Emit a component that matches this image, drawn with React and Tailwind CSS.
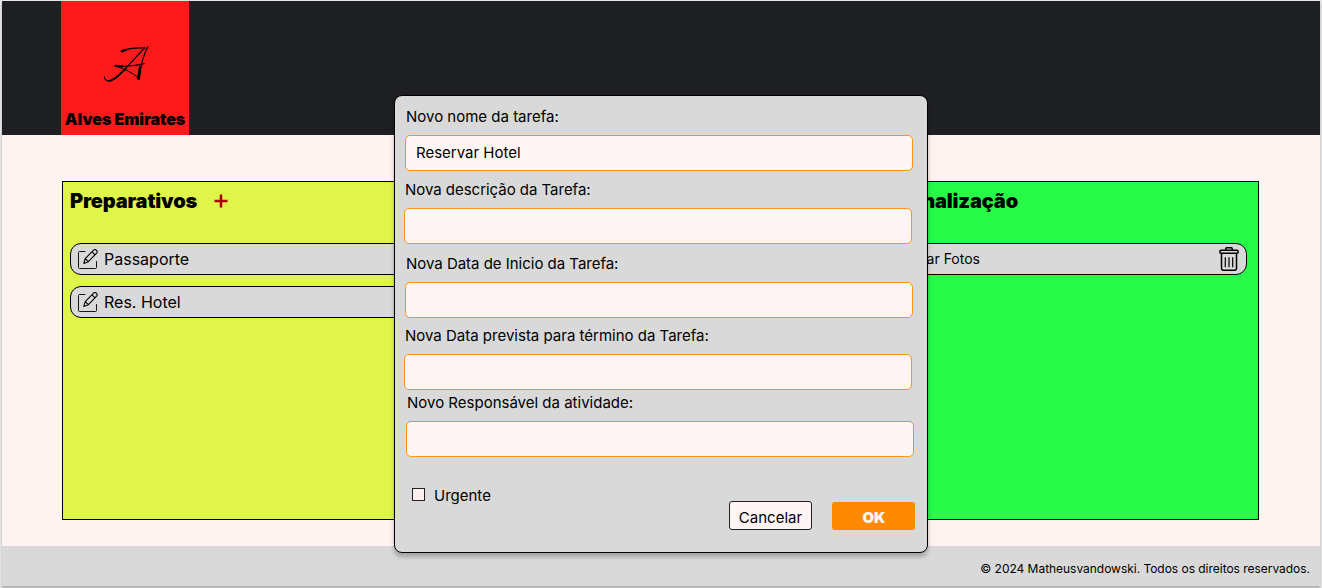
import React from "react";

function LogoMark() {
  return (
    <svg className="mt-[43px] ml-[8px] h-[40px] w-[50px]" viewBox="0 0 50 40" fill="none" stroke="#000" strokeLinecap="round" strokeLinejoin="round">
      <path d="M17.5 6.9 C23 4.6 30 3.6 41 3.8" strokeWidth="1.2" />
      <path d="M17.8 7.4 L22 5.9" strokeWidth="2.2" />
      <path d="M40.5 4 C33 12 26 20 19 27 C13 33 8 37.5 4 37 C1.5 36.3 0.2 34.5 0.3 32.8" strokeWidth="1.1" />
      <path d="M22 24.5 C15 31.5 9 37.5 4.5 36.8" strokeWidth="1.7" />
      <path d="M43.8 2.8 C39.5 11 36.5 23 35 34" strokeWidth="1.2" />
      <path d="M36.2 23 L34.5 34.8" strokeWidth="2.7" />
      <path d="M11.5 21.8 C20 22.8 31 22 40 19.6" strokeWidth="1.1" />
      <path d="M11.5 21.8 L18 22.3" strokeWidth="2.3" />
      <path d="M13 22.5 C20 24.5 28 28.5 34 33.5" strokeWidth="1" />
    </svg>
  );
}

function EditIcon() {
  return (
    <svg className="h-[20px] w-[20px] shrink-0" viewBox="0 0 20 20" fill="none" stroke="#000" strokeWidth="0.9" strokeLinejoin="round" strokeLinecap="round">
      <path d="M7 2.5H1.5a1 1 0 0 0-1 1v15a1 1 0 0 0 1 1h16a1 1 0 0 0 1-1V12.5" />
      <path d="M5.8 14.4 7.2 9.6 15.6 1.1a1.9 1.9 0 0 1 2.7 0l.3.3a1.9 1.9 0 0 1 0 2.7L10.4 12.7Z M7.2 9.6l3.2 3.1 M14 2.8l3 3" strokeWidth="1.1" />
    </svg>
  );
}

function TrashIcon() {
  return (
    <svg className="h-[24px] w-[20px] shrink-0" viewBox="0 0 20 24" fill="none" stroke="#000" strokeWidth="1.5" strokeLinejoin="round" strokeLinecap="round">
      <rect x="0.9" y="3.2" width="18.2" height="3" rx="1" />
      <path d="M6.8 3V1.6a.8.8 0 0 1 .8-.8h4.8a.8.8 0 0 1 .8.8V3" />
      <path d="M2.5 6.4V21.2a2 2 0 0 0 2 2h11a2 2 0 0 0 2-2V6.4" />
      <path strokeWidth="1.2" d="M6.3 10.7v9M10 10.7v9M13.7 10.7v9" />
    </svg>
  );
}

function Task({ name }) {
  return (
    <div className="flex h-[32px] items-center gap-[6px] rounded-[11px] border border-black bg-[#d9d9d9] pl-[7px] text-[16px]">
      <EditIcon />
      <span>{name}</span>
    </div>
  );
}

function Field({ label, value = "", labelClass, inputClass }) {
  return (
    <label className="block">
      <span className={`block h-5 text-[15px] leading-5 ${labelClass}`}>{label}</span>
      <input
        defaultValue={value}
        className={`block h-[36px] w-[507.5px] rounded-[5px] border border-[#ff9417] bg-[#fff5f4] px-[10px] pb-[2px] text-[15px] outline-none ${inputClass}`}
      />
    </label>
  );
}

export default function App() {
  return (
    <div className="relative h-[588px] w-[1322px] overflow-hidden bg-[#e6e6e6] px-[2px] pt-px font-['Inter',sans-serif] text-black">
      <div className="flex h-[585px] w-[1318px] flex-col bg-[#fdf3f1] shadow-[0_2px_2px_rgba(0,0,0,0.25)]">
        <header className="h-[134px] bg-[#1e1f23] pl-[59px]">
          <div className="flex h-full w-[128px] flex-col items-center bg-[#fc1a1b]">
            <LogoMark />
            <span className="mt-[25px] text-[16px] leading-[20px] font-black tracking-[-0.03px] whitespace-nowrap">Alves Emirates</span>
          </div>
        </header>
        <main className="flex flex-1 pt-[46px] pl-[60px]">
          <section className="h-[339px] w-[399px] border border-black bg-[#e0f54a] px-[7px] pt-[6px]">
            <h2 className="flex h-[25px] items-center text-[20px] font-black tracking-[-0.15px]">
              Preparativos
              <svg className="mt-px ml-[17px] h-[14px] w-[14px]" viewBox="0 0 14 14" stroke="#a80000" strokeWidth="2.5">
                <path d="M0.5 7h13M7 0.5v13" />
              </svg>
            </h2>
            <div className="mt-[30px] flex flex-col gap-[11px]">
              <Task name="Passaporte" />
              <Task name="Res. Hotel" />
            </div>
          </section>
          <section className="h-[339px] w-[399px] border-y border-black bg-[#e0f54a]" />
          <section className="h-[339px] w-[399px] border border-black bg-[#27fb47] px-[11px] pt-[7px]">
            <h2 className="h-[25px] w-[146px] text-right text-[20px] leading-[25px] font-black tracking-[-0.15px]">Finalização</h2>
            <div className="mt-[29px] flex h-[32px] items-center justify-between rounded-[11px] border border-black bg-[#d9d9d9] pr-[7px] text-[14px]">
              <span className="w-[107px] pb-px text-right">Enviar Fotos</span>
              <TrashIcon />
            </div>
          </section>
        </main>
        <footer className="flex h-[40px] items-center justify-end bg-[#d9d9d9] pt-[6px] pr-[10px] text-[12px] tracking-[-0.03px]">
          © 2024 Matheusvandowski. Todos os direitos reservados.
        </footer>
      </div>

      <div className="absolute top-[95px] left-[394px] h-[458px] w-[534px] rounded-[8px] border border-black bg-[#d9d9d9] pt-[11px] pl-[9px] shadow-[0_4px_4px_rgba(0,0,0,0.25)]">
        <Field label="Novo nome da tarefa:" value="Reservar Hotel" labelClass="ml-[2px]" inputClass="mt-[8px] ml-[1px]" />
        <div className="mt-[9px]">
          <Field label="Nova descrição da Tarefa:" labelClass="ml-px tracking-[-0.03px]" inputClass="mt-[8px]" />
        </div>
        <div className="mt-[10px]">
          <Field label="Nova Data de Inicio da Tarefa:" labelClass="ml-[2px] tracking-[-0.02px]" inputClass="mt-[8px] ml-[1px]" />
        </div>
        <div className="mt-[8px]">
          <Field label="Nova Data prevista para término da Tarefa:" labelClass="ml-px" inputClass="mt-[8px]" />
        </div>
        <div className="mt-[3px]">
          <Field label="Novo Responsável da atividade:" labelClass="ml-[3px]" inputClass="mt-[8px] ml-[2px]" />
        </div>
        <label className="mt-[29px] ml-[8px] flex h-5 items-center gap-[9px] text-[15px]">
          <span className="mb-[4px] h-[13px] w-[13px] border border-[#222] bg-[#fff0f0]" />
          Urgente
        </label>
        <div className="-mt-[5px] flex gap-[20px] pl-[324.5px]">
          <button className="h-[29px] w-[83px] rounded-[3px] border border-[#222] bg-[#fff5f4] pt-[4px] pl-[1px] text-[15px] leading-5">Cancelar</button>
          <button className="mt-px h-[28px] w-[83px] rounded-[3px] bg-[#ff8a00] pt-[4px] pl-[2px] text-[15px] leading-5 font-black text-[#fff5f4]">OK</button>
        </div>
      </div>
    </div>
  );
}
